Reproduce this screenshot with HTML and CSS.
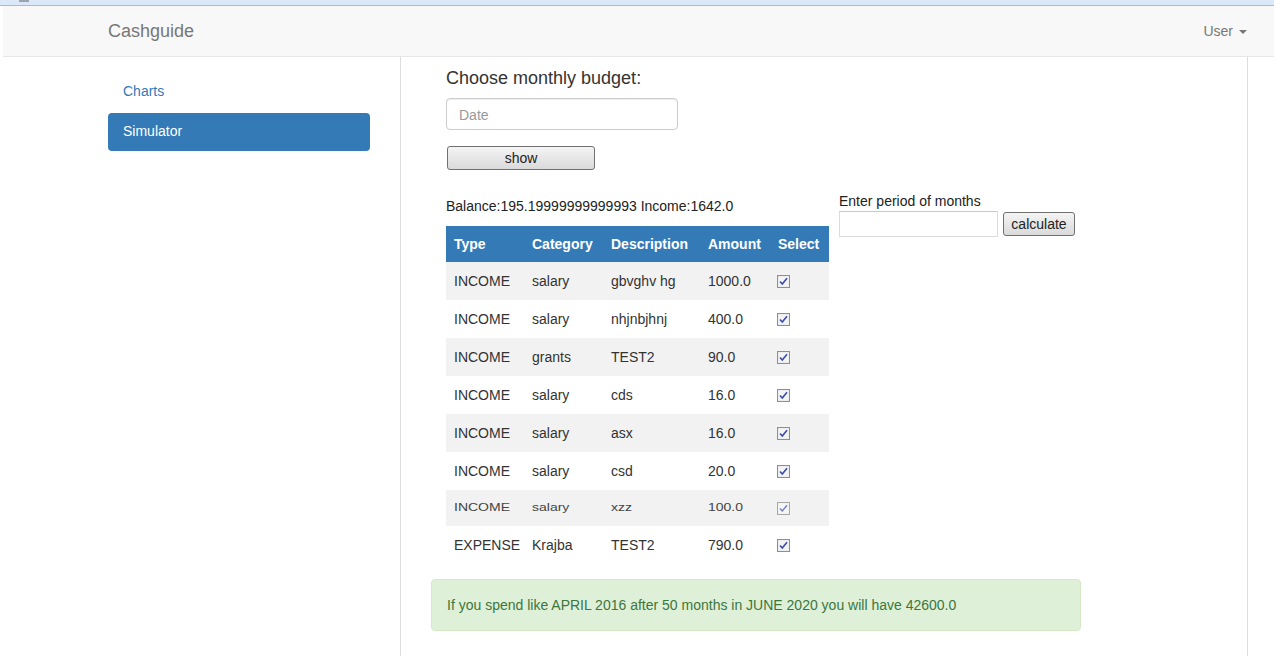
FILE: index.html
```html
<!DOCTYPE html>
<html>
<head>
<meta charset="utf-8">
<title>Cashguide</title>
<link rel="stylesheet" href="styles.css">
</head>
<body>
<div class="topstrip"><span class="tabmark"></span></div>
<nav class="navbar">
  <span class="brand">Cashguide</span>
  <span class="user">User<span class="caret"></span></span>
</nav>
<div class="page">
  <aside class="sidebar">
    <ul class="pills">
      <li><a class="pill">Charts</a></li>
      <li><a class="pill active">Simulator</a></li>
    </ul>
  </aside>
  <main class="main">
    <div class="inner">
      <h3 class="title">Choose monthly budget:</h3>
      <input class="date-input" type="text" placeholder="Date">
      <div><button class="btn show-btn">show</button></div>
      <div class="row">
        <div class="left-col">
          <p class="balance">Balance:195.19999999999993 Income:1642.0</p>
          <table class="tbl">
            <thead>
              <tr><th class="c1">Type</th><th class="c2">Category</th><th class="c3">Description</th><th class="c4">Amount</th><th class="c5">Select</th></tr>
            </thead>
            <tbody>
              <tr><td>INCOME</td><td>salary</td><td>gbvghv hg</td><td>1000.0</td><td><svg class="cb" width="13" height="13" viewBox="0 0 13 13"><rect x="0.5" y="0.5" width="12" height="12" fill="#e6e6e6" stroke="#8e8f8f"/><rect x="1.5" y="1.5" width="10" height="10" fill="#f4f4f4"/><path d="M3 6.5 L5.3 9 L10 3.2" fill="none" stroke="#3a4ca8" stroke-width="1.6"/></svg></td></tr>
              <tr><td>INCOME</td><td>salary</td><td>nhjnbjhnj</td><td>400.0</td><td><svg class="cb" width="13" height="13" viewBox="0 0 13 13"><rect x="0.5" y="0.5" width="12" height="12" fill="#e6e6e6" stroke="#8e8f8f"/><rect x="1.5" y="1.5" width="10" height="10" fill="#f4f4f4"/><path d="M3 6.5 L5.3 9 L10 3.2" fill="none" stroke="#3a4ca8" stroke-width="1.6"/></svg></td></tr>
              <tr><td>INCOME</td><td>grants</td><td>TEST2</td><td>90.0</td><td><svg class="cb" width="13" height="13" viewBox="0 0 13 13"><rect x="0.5" y="0.5" width="12" height="12" fill="#e6e6e6" stroke="#8e8f8f"/><rect x="1.5" y="1.5" width="10" height="10" fill="#f4f4f4"/><path d="M3 6.5 L5.3 9 L10 3.2" fill="none" stroke="#3a4ca8" stroke-width="1.6"/></svg></td></tr>
              <tr><td>INCOME</td><td>salary</td><td>cds</td><td>16.0</td><td><svg class="cb" width="13" height="13" viewBox="0 0 13 13"><rect x="0.5" y="0.5" width="12" height="12" fill="#e6e6e6" stroke="#8e8f8f"/><rect x="1.5" y="1.5" width="10" height="10" fill="#f4f4f4"/><path d="M3 6.5 L5.3 9 L10 3.2" fill="none" stroke="#3a4ca8" stroke-width="1.6"/></svg></td></tr>
              <tr><td>INCOME</td><td>salary</td><td>asx</td><td>16.0</td><td><svg class="cb" width="13" height="13" viewBox="0 0 13 13"><rect x="0.5" y="0.5" width="12" height="12" fill="#e6e6e6" stroke="#8e8f8f"/><rect x="1.5" y="1.5" width="10" height="10" fill="#f4f4f4"/><path d="M3 6.5 L5.3 9 L10 3.2" fill="none" stroke="#3a4ca8" stroke-width="1.6"/></svg></td></tr>
              <tr><td>INCOME</td><td>salary</td><td>csd</td><td>20.0</td><td><svg class="cb" width="13" height="13" viewBox="0 0 13 13"><rect x="0.5" y="0.5" width="12" height="12" fill="#e6e6e6" stroke="#8e8f8f"/><rect x="1.5" y="1.5" width="10" height="10" fill="#f4f4f4"/><path d="M3 6.5 L5.3 9 L10 3.2" fill="none" stroke="#3a4ca8" stroke-width="1.6"/></svg></td></tr>
              <tr class="squish"><td><span>INCOME</span></td><td><span>salary</span></td><td><span>xzz</span></td><td><span>100.0</span></td><td><svg class="cb" width="13" height="13" viewBox="0 0 13 13"><rect x="0.5" y="0.5" width="12" height="12" fill="#ececec" stroke="#a8a8a8"/><rect x="1.5" y="1.5" width="10" height="10" fill="#f6f6f6"/><path d="M3 6.5 L5.3 9 L10 3.2" fill="none" stroke="#7080c0" stroke-width="1.4"/></svg></td></tr>
              <tr><td>EXPENSE</td><td>Krajba</td><td>TEST2</td><td>790.0</td><td><svg class="cb" width="13" height="13" viewBox="0 0 13 13"><rect x="0.5" y="0.5" width="12" height="12" fill="#e6e6e6" stroke="#8e8f8f"/><rect x="1.5" y="1.5" width="10" height="10" fill="#f4f4f4"/><path d="M3 6.5 L5.3 9 L10 3.2" fill="none" stroke="#3a4ca8" stroke-width="1.6"/></svg></td></tr>
            </tbody>
          </table>
        </div>
        <div class="right-col">
          <label class="period-label">Enter period of months</label>
          <div class="period-row">
            <input class="period-input" type="text">
            <button class="btn calc-btn">calculate</button>
          </div>
        </div>
      </div>
    </div>
    <div class="alert">If you spend like APRIL 2016 after 50 months in JUNE 2020 you will have 42600.0</div>
  </main>
</div>
</body>
</html>
```

FILE: styles.css
```css
* { box-sizing: border-box; }
html, body { margin: 0; padding: 0; background: #fff; }
body {
  font-family: "Liberation Sans", Arial, sans-serif;
  font-size: 14px;
  line-height: 20px;
  color: #333;
  overflow: hidden;
}
.topstrip {
  height: 6px;
  background: #dbe8f7;
  border-bottom: 1px solid #a9bcd2;
  display: flex;
}
.tabmark {
  display: block;
  width: 10px;
  height: 2px;
  margin-left: 19px;
  background: #9aa4b0;
}
.navbar {
  margin-left: 3px;
  height: 51px;
  background: #f8f8f8;
  border-bottom: 1px solid #e7e7e7;
  display: flex;
  align-items: center;
  justify-content: space-between;
  padding: 0 27px 0 105px;
}
.brand { font-size: 18px; color: #777; }
.user { color: #777; font-size: 14px; display: flex; align-items: center; }
.caret {
  display: inline-block;
  width: 0; height: 0;
  margin-left: 6px;
  margin-top: 1px;
  border-top: 4px solid #777;
  border-left: 4px solid transparent;
  border-right: 4px solid transparent;
}
.page {
  display: flex;
  margin-left: 3px;
  height: calc(100vh - 57px);
}
.sidebar {
  width: 398px;
  border-right: 1px solid #ddd;
  padding: 16px 30px 0 105px;
}
.pills { list-style: none; margin: 0; padding: 0; }
.pills li + li { margin-top: 2px; }
.pill {
  display: block;
  padding: 8px 15px 10px;
  color: #337ab7;
  border-radius: 4px;
}
.pill.active { background: #337ab7; color: #fff; }
.main {
  width: 847px;
  border-right: 1px solid #ddd;
  padding: 11px 0 0 30px;
}
.inner { padding: 0 15px; }
.title {
  margin: 0;
  font-size: 18px;
  font-weight: normal;
  line-height: 20px;
  color: #333;
}
.date-input {
  display: block;
  margin-top: 10px;
  width: 232px;
  height: 32px;
  border: 1px solid #ccc;
  border-radius: 4px;
  padding: 7px 12px 5px;
  font-family: inherit;
  font-size: 14px;
  color: #555;
  box-shadow: inset 0 1px 1px rgba(0,0,0,.075);
}
.date-input::placeholder { color: #999; }
.btn {
  font-family: inherit;
  font-size: 14px;
  color: #222;
  background: linear-gradient(#f4f4f4, #dadada);
  border: 1px solid #707070;
  border-radius: 3px;
  padding: 0;
  height: 24px;
  line-height: 20px;
}
.show-btn {
  margin-top: 16px;
  margin-left: 1px;
  width: 148px;
  display: block;
}
.row {
  display: flex;
  align-items: flex-start;
  margin-top: 21px;
}
.left-col { width: 383px; padding-top: 5px; }
.balance { margin: 0 0 10px; color: #222; }
.tbl {
  border-collapse: collapse;
  width: 383px;
  table-layout: fixed;
}
.tbl th {
  background: #337ab7;
  color: #fff;
  font-weight: bold;
  text-align: left;
  padding: 8px 8px;
  line-height: 20px;
  white-space: nowrap;
}
.tbl td {
  padding: 9px 8px;
  line-height: 20px;
  height: 38px;
  white-space: nowrap;
  vertical-align: middle;
  color: #333;
}
.tbl tbody tr:nth-child(odd) td { background: #f2f2f2; }
.c1 { width: 78px; }
.c2 { width: 79px; }
.c3 { width: 97px; }
.c4 { width: 70px; }
.c5 { width: 59px; }
.cb { display: block; margin-left: -1px; }
.tbl tr.squish td { height: 36px; padding-top: 8px; padding-bottom: 8px; }
.squish span {
  display: inline-block;
  vertical-align: top;
  line-height: 20px;
  transform: scaleY(0.75);
  transform-origin: 50% 40%;
  color: #444;
}
.right-col { margin-left: 10px; }
.period-label { display: block; color: #222; }
.period-row { display: flex; align-items: center; }
.period-input {
  width: 159px;
  height: 26px;
  border: 1px solid #dcdcdc;
  border-top-color: #c9c9c9;
  padding: 2px 4px;
  font-family: inherit;
  font-size: 14px;
}
.calc-btn { margin-left: 5px; width: 72px; }
.alert {
  margin-top: 15px;
  width: 650px;
  padding: 15px;
  border: 1px solid #d6e9c6;
  border-radius: 4px;
  background: #dff0d8;
  color: #3c763d;
}
```
